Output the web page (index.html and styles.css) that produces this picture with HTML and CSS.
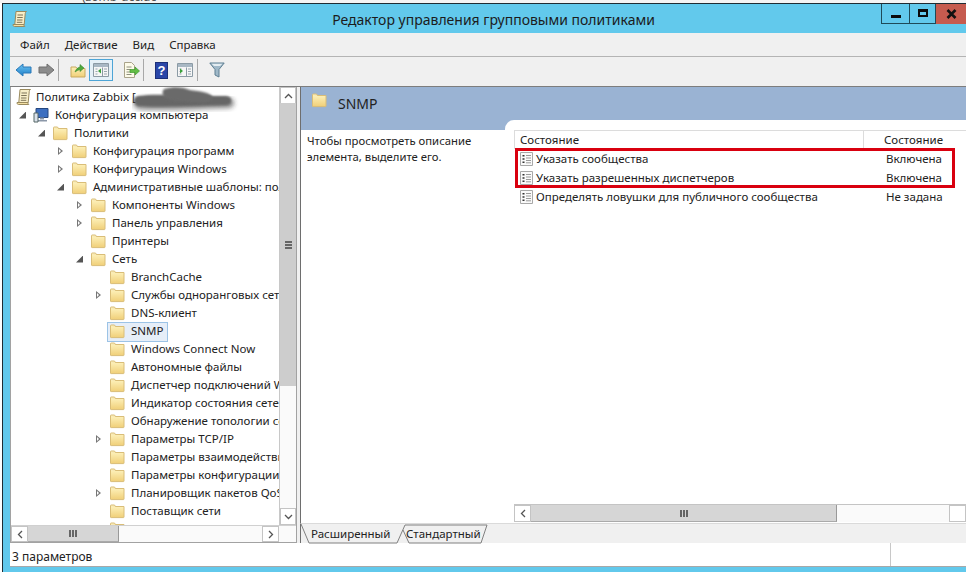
FILE: index.html
```html
<!DOCTYPE html>
<html lang="ru">
<head>
<meta charset="utf-8">
<title>Редактор управления групповыми политиками</title>
<link rel="stylesheet" href="styles.css">
</head>
<body>
<svg class="defs" width="0" height="0" aria-hidden="true">
  <defs>
    <linearGradient id="fg" x1="0" y1="0" x2="0" y2="1"><stop offset="0" stop-color="#fdf0b8"/><stop offset="1" stop-color="#f0cf78"/></linearGradient>
    <linearGradient id="bg" x1="0" y1="0" x2="0" y2="1"><stop offset="0" stop-color="#6cc4f2"/><stop offset="1" stop-color="#1f7fc8"/></linearGradient>
    <symbol id="folder" viewBox="0 0 16 16">
      <path d="M1.5 3.5V14a.6.6 0 0 0 .6.6h12.3a.6.6 0 0 0 .6-.6V3.5z" fill="url(#fg)" stroke="#d9bd78"/>
      <path d="M1.5 4V2.6c0-.4.3-.6.6-.6h3.4l1 1.5h8.5" fill="#fbeebb" stroke="#d9bd78"/>
    </symbol>
    <symbol id="scroll" viewBox="0 0 16 18">
      <path d="M4 1.5h10.5c-1 .6-1.3 1.6-1.3 2.5l-1 10.5H2.8z" fill="#f8eec8" stroke="#9a8a5e"/>
      <path d="M1 14.5h11c-.2 1 .2 1.7.8 2H2.500c-1 0-1.700-1-1.500-2z" fill="#f3dfa2" stroke="#9a8a5e"/>
      <path d="M5.500 5h5.500M5.200 7.500h5.500M5 10h5.500M4.800 12.300h5.500" stroke="#7d7358" fill="none"/>
    </symbol>
    <symbol id="doc" viewBox="0 0 13 14">
      <path d="M.5.500h12v13H.5z" fill="#fafafa" stroke="#a8a8a8"/>
      <path d="M2.500 3h2v1.600h-2zM2.500 6.200h2v1.600h-2zM2.500 9.400h2v1.600h-2z" fill="#333"/>
      <path d="M6 3.500h5M6 6h5M6 8.500h5M6 10.800h5" stroke="#9a9a9a" fill="none"/>
    </symbol>
    <symbol id="pane" viewBox="0 0 16 14">
      <path d="M.5.500h15v13H.5z" fill="#f6f6f6" stroke="#8c9ba5"/>
      <path d="M1 1h14v3H1z" fill="#a9b8c4"/>
      <path d="M9.500 4.500v9" stroke="#8c9ba5"/>
      <path d="M2.500 6h2M2.500 8.500h2M2.500 11h2M11 6h3M11 8.500h3M11 11h3" stroke="#99a6b0" fill="none"/>
    </symbol>
  </defs>
</svg>

<div class="desktop"><span class="desktop-text">(zomb-ucc.dc</span></div>

<div class="window">
  <header class="titlebar">
    <svg class="title-icon"><use href="#scroll"/></svg>
    <h1 class="title">Редактор управления групповыми политиками</h1>
    <div class="controls">
      <span class="ctl ctl-min"><i class="min-glyph"></i></span>
      <span class="ctl ctl-max"><i class="max-glyph"></i></span>
      <span class="ctl ctl-close">
        <svg width="11" height="10" viewBox="0 0 11 10"><path d="M1.500 1l8 8M9.500 1l-8 8" stroke="#111" stroke-width="2.600"/></svg>
      </span>
    </div>
  </header>

  <div class="client">
    <nav class="menubar">
      <span>Файл</span><span>Действие</span><span>Вид</span><span>Справка</span>
    </nav>

    <div class="toolbar">
      <svg class="tb tb-arrow" viewBox="0 0 17 14"><path d="M1 7l7-6v3h8v6H8v3z" fill="url(#bg)" stroke="#2a79b8"/></svg>
      <svg class="tb tb-arrow" viewBox="0 0 17 14"><path d="M16 7L9 1v3H1v6h8v3z" fill="#8c8c8c" stroke="#6f6f6f"/></svg>
      <i class="tb-sep tb-sep-first"></i>
      <svg class="tb tb-up" viewBox="0 0 16 15"><path d="M1 4h5l1 1.500h8V14H1z" fill="url(#fg)" stroke="#c9a95f"/><path d="M5 9c1-3 3-4.500 5-5V1.500L14 5l-4 3.500V6.500C8 7 6.500 8 5 9z" fill="#4fa83d" stroke="#3b8a2d" stroke-width=".6"/></svg>
      <span class="tb-active"><svg class="tb-pane" viewBox="0 0 16 14"><use href="#pane"/><path d="M8 5.500v5L5 8z" fill="#3aa13a"/></svg></span>
      <svg class="tb tb-export" viewBox="0 0 17 16"><path d="M1.500.500h7l3 3v12h-10z" fill="#fdfbe9" stroke="#a9a38a"/><path d="M3.500 5h5M3.500 7.500h4M3.500 10h4M3.500 12.500h5" stroke="#8f8f7f"/><path d="M7 7.500h5V5l4.500 4-4.500 4v-2.500H7z" fill="#63bd45" stroke="#3f9a2c" stroke-width=".7"/></svg>
      <i class="tb-sep"></i>
      <span class="tb-help">?</span>
      <svg class="tb tb-pane2" viewBox="0 0 16 14"><use href="#pane"/><path d="M3 5.500v5L6 8z" fill="#3aa13a"/></svg>
      <i class="tb-sep"></i>
      <svg class="tb tb-filter" viewBox="0 0 16 16"><path d="M.8 1h14.400L10 7.500V15l-4-2V7.500z" fill="#9fb8c8" stroke="#5f7f92"/><path d="M2.500 1.800h11L11 4H5z" fill="#e4edf2"/></svg>
    </div>

    <div class="main">
      <section class="tree-panel">
        <div class="tree-top">
          <div class="tree">
            <div class="row l0"><svg class="ic-scroll"><use href="#scroll"/></svg><span class="t">Политика Zabbix [</span></div>
            <div class="row l1"><i class="ar open"></i><svg class="ic" viewBox="0 0 16 16"><path d="M3 1.500h12v9H3z" fill="#3d6fc0" stroke="#25477f"/><path d="M7 10.500h4v2H7zM4 13h10v1.500H4z" fill="#8b97a8"/><path d="M1 6h4v9H1z" fill="#dbe2ea" stroke="#566"/></svg><span class="t">Конфигурация компьютера</span></div>
            <div class="row l2"><i class="ar open"></i><svg class="ic"><use href="#folder"/></svg><span class="t">Политики</span></div>
            <div class="row l3"><i class="ar"></i><svg class="ic"><use href="#folder"/></svg><span class="t">Конфигурация программ</span></div>
            <div class="row l3"><i class="ar"></i><svg class="ic"><use href="#folder"/></svg><span class="t">Конфигурация Windows</span></div>
            <div class="row l3"><i class="ar open"></i><svg class="ic"><use href="#folder"/></svg><span class="t">Административные шаблоны: политики</span></div>
            <div class="row l4"><i class="ar"></i><svg class="ic"><use href="#folder"/></svg><span class="t">Компоненты Windows</span></div>
            <div class="row l4"><i class="ar"></i><svg class="ic"><use href="#folder"/></svg><span class="t">Панель управления</span></div>
            <div class="row l4"><i class="ar none"></i><svg class="ic"><use href="#folder"/></svg><span class="t">Принтеры</span></div>
            <div class="row l4"><i class="ar open"></i><svg class="ic"><use href="#folder"/></svg><span class="t">Сеть</span></div>
            <div class="row l5"><i class="ar none"></i><svg class="ic"><use href="#folder"/></svg><span class="t">BranchCache</span></div>
            <div class="row l5"><i class="ar"></i><svg class="ic"><use href="#folder"/></svg><span class="t">Службы одноранговых сетей</span></div>
            <div class="row l5"><i class="ar none"></i><svg class="ic"><use href="#folder"/></svg><span class="t">DNS-клиент</span></div>
            <div class="row l5 sel"><i class="ar none"></i><svg class="ic"><use href="#folder"/></svg><span class="t">SNMP</span></div>
            <div class="row l5"><i class="ar none"></i><svg class="ic"><use href="#folder"/></svg><span class="t">Windows Connect Now</span></div>
            <div class="row l5"><i class="ar none"></i><svg class="ic"><use href="#folder"/></svg><span class="t">Автономные файлы</span></div>
            <div class="row l5"><i class="ar none"></i><svg class="ic"><use href="#folder"/></svg><span class="t">Диспетчер подключений Windows</span></div>
            <div class="row l5"><i class="ar none"></i><svg class="ic"><use href="#folder"/></svg><span class="t">Индикатор состояния сетевого</span></div>
            <div class="row l5"><i class="ar none"></i><svg class="ic"><use href="#folder"/></svg><span class="t">Обнаружение топологии сети</span></div>
            <div class="row l5"><i class="ar"></i><svg class="ic"><use href="#folder"/></svg><span class="t">Параметры TCP/IP</span></div>
            <div class="row l5"><i class="ar none"></i><svg class="ic"><use href="#folder"/></svg><span class="t">Параметры взаимодействия</span></div>
            <div class="row l5"><i class="ar none"></i><svg class="ic"><use href="#folder"/></svg><span class="t">Параметры конфигурации</span></div>
            <div class="row l5"><i class="ar"></i><svg class="ic"><use href="#folder"/></svg><span class="t">Планировщик пакетов QoS</span></div>
            <div class="row l5"><i class="ar none"></i><svg class="ic"><use href="#folder"/></svg><span class="t">Поставщик сети</span></div>
            <div class="row l5"><i class="ar none"></i><svg class="ic"><use href="#folder"/></svg><span class="t">Сетевой</span></div>
            <svg class="scribble" width="110" height="34" viewBox="0 0 110 34">
              <defs><filter id="blur"><feGaussianBlur stdDeviation="1.200"/></filter><filter id="blur2"><feGaussianBlur stdDeviation="2.500"/></filter></defs>
              <path d="M6 14c20-2 40 1 90 0 8 0 8 10 0 10-40 1-70 3-90 1-6-2-6-10 0-11z" fill="#222" opacity=".55" filter="url(#blur2)"/>
              <path d="M6 12c20-3 30 0 88 0 7 0 7 9 0 9-40 1-70 2-88 1-5-2-5-9 0-10z" fill="#666" filter="url(#blur)"/>
              <path d="M32 5c10-3 20-2 26 1 10 1 20 3 22 6 2 5-6 8-14 6-12 0-30-1-34-5-2-3-2-6 0-8z" fill="#6b6b6b" filter="url(#blur)"/>
            </svg>
          </div>
          <div class="vscroll">
            <span class="sb-btn"><svg width="9" height="6" viewBox="0 0 9 6"><path d="M1 5l3.500-3.500L8 5" fill="none" stroke="#555" stroke-width="1.300"/></svg></span>
            <span class="vthumb"><i class="grip-h"></i></span>
            <span class="sb-fill"></span>
            <span class="sb-btn"><svg width="9" height="6" viewBox="0 0 9 6"><path d="M1 1l3.500 3.500L8 1" fill="none" stroke="#555" stroke-width="1.300"/></svg></span>
          </div>
        </div>
        <div class="hscroll tree-h">
          <span class="sb-btn"><svg width="6" height="9" viewBox="0 0 6 9"><path d="M5 1L1.500 4.500 5 8" fill="none" stroke="#555" stroke-width="1.300"/></svg></span>
          <span class="hthumb tree-thumb"><i class="grip-v"></i></span>
          <span class="sb-fill"></span>
          <span class="sb-btn"><svg width="6" height="9" viewBox="0 0 6 9"><path d="M1 1l3.500 3.500L1 8" fill="none" stroke="#555" stroke-width="1.300"/></svg></span>
        </div>
      </section>

      <section class="pane">
        <div class="pane-area">
          <div class="pane-head"><svg class="pane-folder"><use href="#folder"/></svg><span class="pane-title">SNMP</span></div>
          <div class="pane-body">
            <p class="desc">Чтобы просмотреть описание<br>элемента, выделите его.</p>
            <div class="list">
              <div class="list-rows">
                <div class="list-head"><span class="c1">Состояние</span><span class="c2">Состояние</span></div>
                <div class="hl">
                  <div class="list-row"><svg class="ic-doc"><use href="#doc"/></svg><span class="c1">Указать сообщества</span><span class="c2">Включена</span></div>
                  <div class="list-row"><svg class="ic-doc"><use href="#doc"/></svg><span class="c1">Указать разрешенных диспетчеров</span><span class="c2">Включена</span></div>
                </div>
                <div class="list-row"><svg class="ic-doc"><use href="#doc"/></svg><span class="c1">Определять ловушки для публичного сообщества</span><span class="c2 c2-unset">Не задана</span></div>
              </div>
              <div class="hscroll list-h">
                <span class="sb-btn"><svg width="6" height="9" viewBox="0 0 6 9"><path d="M5 1L1.500 4.500 5 8" fill="none" stroke="#555" stroke-width="1.300"/></svg></span>
                <span class="hthumb list-thumb"><i class="grip-v"></i></span>
                <span class="sb-fill"></span>
                <span class="sb-btn"></span>
              </div>
            </div>
          </div>
        </div>
        <div class="tabs">
          <svg class="tab-shape" width="190" height="20" viewBox="0 0 190 20"><path d="M0 0l8 19H96L104 1M102 6l6 13M104 1h82l-6 18H108" fill="none" stroke="#808080"/></svg>
          <span class="tab tab-first">Расширенный</span>
          <span class="tab tab-second">Стандартный</span>
        </div>
      </section>
    </div>

    <footer class="status"><span class="status-left">3 параметров</span><span class="status-right"></span></footer>
  </div>
</div>
</body>
</html>
```
FILE: styles.css
```css
* { box-sizing: border-box; }
html, body { margin: 0; height: 100%; }
body {
  width: 966px; height: 572px; overflow: hidden;
  background: #fff; display: flex; flex-direction: column;
  font: 11.500px "Noto Sans", "Open Sans", sans-serif; color: #222;
}
.defs { position: absolute; }
.desktop { height: 3px; overflow: hidden; background: #f4f4f4; padding-left: 82px; position: relative; }
.desktop-text { display: block; font-size: 12px; line-height: 12px; margin-top: -9px; color: #555; }

.window {
  flex: 1; margin-left: 2px; min-height: 0;
  border-top: 1px solid #1f2c33; border-left: 1px solid #1f2c33;
  background: #62c9ec; display: flex; flex-direction: column;
  padding: 0 0 5px 7px;
}
.titlebar { height: 29px; flex: none; margin-left: -7px; position: relative; display: flex; justify-content: center; }
.title-icon { position: absolute; left: 9px; top: 6px; width: 16px; height: 18px; }
.title { margin: 0 0 0 18px; font: 400 14px/31px "Noto Sans", sans-serif; color: #1c1c1c; }
.controls { position: absolute; right: 0; top: 0; height: 20px; display: flex; }
.ctl { display: flex; align-items: center; justify-content: center; border-bottom: 1px solid #1f4a58; border-left: 1px solid #1f4a58; }
.ctl-min { width: 28px; }
.ctl-max { width: 26px; }
.ctl-close { width: 31px; background: #c65b4f; border-left-color: #1f4a58; border-bottom: 0; }
.min-glyph { display: block; width: 10px; height: 3px; background: #0b0b0b; margin-top: 6px; }
.max-glyph { display: block; width: 10px; height: 8px; border: 2px solid #0b0b0b; border-top-width: 3px; margin-top: -2px; }

.client { flex: 1; min-height: 0; display: flex; flex-direction: column; background: #f0f0f0; }
.menubar {
  height: 24px; flex: none; display: flex; gap: 15px; padding-left: 10px;
  align-items: center; border-bottom: 1px solid #b4b4b4; color: #222;
}
.toolbar {
  height: 30px; flex: none; display: flex; align-items: center; padding: 0 0 3px 5px;
  border-bottom: 1px solid #7d7d7d;
}
.tb { display: block; flex: none; }
.tb-arrow { width: 17px; height: 14px; margin-right: 6px; }
.tb-sep { display: block; width: 1px; height: 22px; background: #a8a8a8; flex: none; }
.tb-sep-first { margin-left: -3px; }
.tb-up { width: 16px; height: 15px; margin: 0 3px 0 11px; }
.tb-active {
  width: 24px; height: 22px; border: 1px solid #4ea5d6; background: #e6f1f8;
  display: flex; align-items: center; justify-content: center; flex: none;
}
.tb-pane { width: 16px; height: 14px; }
.tb-export { width: 17px; height: 16px; margin: 0 3px 0 10px; }
.tb-help {
  width: 13px; height: 17px; margin: 0 9px 0 11px; flex: none; background: #2a46a8; color: #fff;
  font: 700 13px/15px "Liberation Sans", sans-serif; text-align: center; border: 1px solid #1c2f78;
}
.tb-pane2 { width: 16px; height: 14px; margin-right: 4px; }
.tb-filter { width: 16px; height: 16px; margin-left: 11px; }

.main { flex: 1; min-height: 0; display: flex; }
.tree-panel {
  width: 287px; flex: none; display: flex; flex-direction: column;
  border: 1px solid #a2a2a2; border-top: 0; background: #fff; margin-right: 3px;
}
.tree-top { flex: 1; min-height: 0; display: flex; }
.tree { flex: 1; min-width: 0; overflow: hidden; position: relative; padding-top: 1px; }
.row { height: 18px; display: flex; align-items: center; white-space: nowrap; line-height: 18px; }
.l0 { padding-left: 5px; }
.l1 { padding-left: 7px; }
.l2 { padding-left: 26px; }
.l3 { padding-left: 45px; }
.l4 { padding-left: 64px; }
.l5 { padding-left: 83px; }
.ar {
  display: block; width: 10px; flex: none; height: 9px; margin-right: 5px; position: relative;
}
.ar::before {
  content: ""; position: absolute; left: 2px; top: 0; width: 0; height: 0;
  border-left: 5px solid #777; border-top: 4.500px solid transparent; border-bottom: 4.500px solid transparent;
}
.ar::after {
  content: ""; position: absolute; left: 3px; top: 2px; width: 0; height: 0;
  border-left: 2.500px solid #fff; border-top: 2.500px solid transparent; border-bottom: 2.500px solid transparent;
}
.ar.open::before {
  left: 1px; top: 1px; border: 0; width: 7px; height: 7px; background: #555;
  clip-path: polygon(100% 0, 100% 100%, 0 100%);
}
.ar.open::after { display: none; }
.ar.none::before, .ar.none::after { display: none; }
.ic { width: 16px; height: 16px; flex: none; margin-right: 6px; display: block; }
.ic-scroll { width: 16px; height: 18px; flex: none; margin-right: 4px; display: block; }
.sel { position: relative; }
.sel::before {
  content: ""; position: absolute; left: 96px; top: 0; width: 59px; height: 18px;
  background: #e6eef8; border: 1px solid #9cc3e6;
}
.sel .ic, .sel .t { position: relative; }
.scribble { position: absolute; left: 121px; top: -3px; }

.vscroll { width: 17px; flex: none; border-left: 1px solid #c8c8c8; display: flex; flex-direction: column; background: #f8f8f8; }
.sb-btn {
  height: 17px; flex: none; background: #fff; border: 1px solid #c4c4c4;
  display: flex; align-items: center; justify-content: center;
}
.vthumb { height: 283px; flex: none; background: #cdcdcd; display: flex; align-items: center; justify-content: center; margin-top: -1px; }
.grip-h { display: block; width: 7px; height: 8px; border-top: 2px solid #666; border-bottom: 2px solid #666; background: linear-gradient(#666,#666) center/100% 2px no-repeat; }
.sb-fill { flex: 1; background: #fafafa; }
.hscroll { height: 17px; flex: none; display: flex; background: #fafafa; }
.hscroll .sb-btn { width: 17px; height: 100%; }
.hthumb { background: #d6d6d6; display: flex; align-items: center; justify-content: center; border-bottom: 1px solid #aaa; border-right: 1px solid #999; flex: none; }
.grip-v { display: block; width: 8px; height: 7px; border-left: 2px solid #666; border-right: 2px solid #666; background: linear-gradient(#666,#666) center/2px 100% no-repeat; }
.tree-h { border-top: 1px solid #d0d0d0; padding-right: 17px; }
.tree-thumb { width: 91px; }

.pane { flex: 1; min-width: 0; display: flex; flex-direction: column; }
.pane-area { flex: 1; min-height: 0; display: flex; flex-direction: column; background: #fff; border-left: 1px solid #6e6e6e; }
.pane-head { height: 33px; flex: none; background: #9ab3d3; display: flex; align-items: center; padding: 0 0 2px 10px; }
.pane-folder { width: 16px; height: 16px; margin-right: 11px; flex: none; margin-top: -5px; }
.pane-title { font-size: 14px; color: #222; margin-top: 1px; }
.pane-body { flex: 1; min-height: 0; display: flex; background: #9ab3d3; }
.desc {
  width: 204px; flex: none; margin: 0; background: #fff; padding: 3px 0 0 6px;
  border-top: 10px solid #9ab3d3; line-height: 16px; font-size: 11.300px;
}
.list {
  flex: 1; min-width: 0; background: #fff; border-top-left-radius: 9px;
  padding: 10px 0 0 9px; display: flex; flex-direction: column;
}
.list-rows { flex: 1; min-height: 0; }
.list-head {
  height: 19px; display: flex; align-items: stretch; line-height: 18px; border-top: 1px solid #dcdcdc; border-left: 1px solid #dcdcdc;
}
.list-head .c1 { width: 349px; padding-left: 5px; border-right: 1px solid #dcdcdc; flex: none; }
.list-head .c2 { padding-left: 20px; }
.hl { position: relative; }
.hl::after {
  content: ""; position: absolute; left: 1px; right: 11px; top: -1px; bottom: -1px;
  border: 3px solid #d9000f; pointer-events: none;
}
.list-row { height: 19px; display: flex; align-items: center; padding-left: 6px; white-space: nowrap; }
.ic-doc { width: 13px; height: 14px; flex: none; margin-right: 3px; display: block; }
.list-row .c1 { width: 350px; flex: none; }
.list-h { margin-bottom: 1px; height: 18px; border-top: 1px solid #c4c4c4; }
.list-thumb { width: 306px; }

.tabs { height: 20px; flex: none; position: relative; display: flex; background: #f0f0f0; border-top: 1px solid #dadada; padding-left: 10px; align-items: center; border-left: 1px solid #6e6e6e; }
.tab-shape { position: absolute; left: 0; top: 0; }
.tab { position: relative; line-height: 20px; }
.tab-first { width: 95px; }

.status { height: 24px; flex: none; background: #fff; display: flex; align-items: center; padding-left: 2px; border-bottom: 1px solid #a8a8a8; font-size: 12px; }
.status-left { width: 879px; flex: none; height: 100%; line-height: 27px; border-right: 1px solid #c8c8c8; }
```
